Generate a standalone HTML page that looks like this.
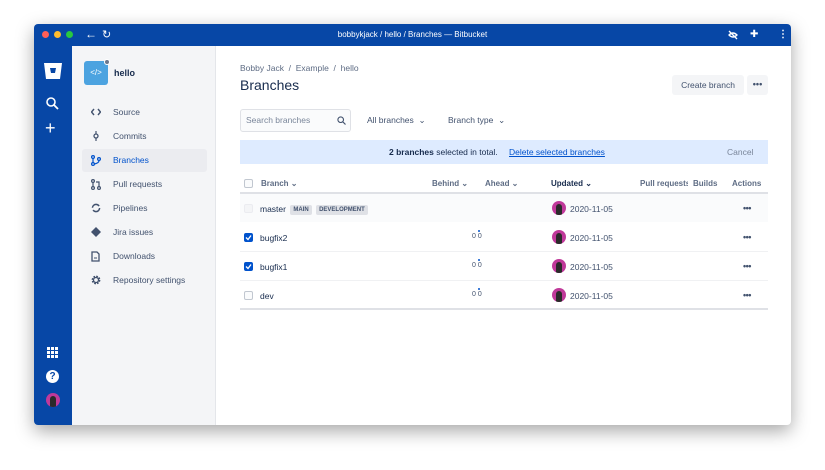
<!DOCTYPE html>
<html><head><meta charset="utf-8"><style>
*{box-sizing:border-box;margin:0;padding:0}
body{width:825px;height:470px;background:#fff;font-family:"Liberation Sans",sans-serif;position:relative;overflow:hidden;color:#172b4d}
.win{position:absolute;left:34px;top:24px;width:757px;height:401px;background:#fff;box-shadow:0 6px 18px rgba(0,0,0,.35);border-radius:4px;overflow:hidden}
.tb{position:absolute;left:0;top:0;width:757px;height:22px;background:#0747a6;color:#fff;font-size:8px}
.dot{position:absolute;top:7px;width:7px;height:7px;border-radius:50%}
.nav{position:absolute;left:0;top:22px;width:38px;height:379px;background:#0747a6}
.side{position:absolute;left:38px;top:22px;width:144px;height:379px;background:#f4f5f7;border-right:1px solid #e4e6ea}
.item{position:absolute;left:10px;width:125px;height:23px;font-size:8.5px;color:#42526e;line-height:23px;padding-left:31px;border-radius:3px}
.item svg{position:absolute;left:9px;top:6px}
.main{position:absolute;left:182px;top:22px;right:0;bottom:0}
.abs{position:absolute}
.row{position:absolute;left:24px;width:528px;height:29px;border-bottom:1px solid #f0f1f3;font-size:8.5px;color:#172b4d}
.cb{position:absolute;left:4px;top:10px;width:9px;height:9px;border:1px solid #c1c7d0;border-radius:2px;background:#fafbfc}
.cb.on{background:#0052cc;border-color:#0052cc}
.av{position:absolute;left:312px;top:7px;width:14px;height:14px;border-radius:50%;background:#c0399a;overflow:hidden}
.av:after{content:"";position:absolute;left:4px;top:3px;width:6px;height:11px;background:#2a2a2a;border-radius:3px 3px 0 0}
.dots{position:absolute;left:503px;top:9px;font-size:9px;font-weight:bold;letter-spacing:-.5px;color:#42526e}
.lz{position:absolute;left:232px;top:10px;font-size:7px;color:#42526e}
.lz:before{content:"";position:absolute;left:6px;top:-3px;width:2px;height:2px;background:#0052cc;border-radius:50%}
.tag{display:inline-block;background:#dfe1e6;color:#42526e;font-size:6px;font-weight:bold;padding:2px 3px;border-radius:2px;margin-left:2px;vertical-align:1px}
.hd{position:absolute;top:133px;font-size:8px;font-weight:bold;color:#5e6c84}
</style></head><body>
<div class="win">
 <div class="tb">
  <div class="dot" style="left:8px;background:#ff5f57"></div>
  <div class="dot" style="left:20px;background:#febc2e"></div>
  <div class="dot" style="left:32px;background:#28c840"></div>
  <div class="abs" style="left:51px;top:3px;font-size:12px">←</div>
  <div class="abs" style="left:68px;top:4px;font-size:11px">↻</div>
  <div class="abs" style="left:0;width:757px;top:6px;text-align:center">bobbykjack / hello / Branches — Bitbucket</div>
  <svg class="abs" style="left:694px;top:6px" width="10" height="10" viewBox="0 0 10 10"><path d="M1 5Q5 1 9 5Q5 9 1 5Z" fill="none" stroke="#fff" stroke-width="1.3"/><path d="M1 1L9 9" stroke="#fff" stroke-width="1.3"/></svg>
  <div class="abs" style="left:716px;top:5px;font-size:10px">✚</div>
  <div class="abs" style="left:744px;top:5px;font-size:10px;font-weight:bold">⋮</div>
 </div>
 <div class="nav">
  <svg class="abs" style="left:10px;top:17px" width="18" height="16" viewBox="0 0 18 16"><path d="M0 0H18L16 16H2Z" fill="#fff"/><path d="M6 5H12L11 10H7Z" fill="#0747a6"/></svg>
  <svg class="abs" style="left:12px;top:51px" width="13" height="13" viewBox="0 0 13 13"><circle cx="5" cy="5" r="4" fill="none" stroke="#fff" stroke-width="1.6"/><path d="M8 8L12 12" stroke="#fff" stroke-width="1.8"/></svg>
  <div class="abs" style="left:11px;top:73px;color:#fff;font-size:18px;line-height:18px">+</div>
  <svg class="abs" style="left:13px;top:301px" width="11" height="11" viewBox="0 0 11 11" fill="#fff"><rect x="0" y="0" width="3" height="3"/><rect x="4" y="0" width="3" height="3"/><rect x="8" y="0" width="3" height="3"/><rect x="0" y="4" width="3" height="3"/><rect x="4" y="4" width="3" height="3"/><rect x="8" y="4" width="3" height="3"/><rect x="0" y="8" width="3" height="3"/><rect x="4" y="8" width="3" height="3"/><rect x="8" y="8" width="3" height="3"/></svg>
  <div class="abs" style="left:12px;top:324px;width:13px;height:13px;border-radius:50%;background:#fff;color:#0747a6;font-size:10px;font-weight:bold;text-align:center;line-height:13px">?</div>
  <div class="abs" style="left:12px;top:347px;width:14px;height:14px;border-radius:50%;background:#c0399a;overflow:hidden"><div style="position:absolute;left:4px;top:3px;width:6px;height:11px;background:#2a2a2a;border-radius:3px 3px 0 0"></div></div>
 </div>
 <div class="side">
  <div class="abs" style="left:12px;top:15px;width:24px;height:24px;border-radius:3px;background:#4ca3e0;color:#fff;font-size:8px;text-align:center;line-height:24px">&lt;/&gt;</div>
  <div class="abs" style="left:32px;top:13px;width:6px;height:6px;border-radius:50%;background:#6b778c;border:1px solid #fff"></div>
  <div class="abs" style="left:42px;top:22px;font-size:9px;font-weight:bold;color:#172b4d">hello</div>
  <div class="item" style="top:55px"><svg width="10" height="10" viewBox="0 0 10 10"><path d="M3 2L0.5 5L3 8M7 2L9.5 5L7 8" fill="none" stroke="#42526e" stroke-width="1.4"/></svg>Source</div>
  <div class="item" style="top:79px"><svg width="10" height="10" viewBox="0 0 10 10"><path d="M5 0V10" stroke="#42526e" stroke-width="1.2"/><circle cx="5" cy="5" r="2" fill="#f4f5f7" stroke="#42526e" stroke-width="1.3"/></svg>Commits</div>
  <div class="item" style="top:103px;background:#ebecf0;color:#0052cc"><svg width="10" height="11" viewBox="0 0 10 11"><circle cx="2" cy="2" r="1.4" fill="none" stroke="#0052cc" stroke-width="1.2"/><circle cx="2" cy="9" r="1.4" fill="none" stroke="#0052cc" stroke-width="1.2"/><circle cx="8" cy="4" r="1.4" fill="none" stroke="#0052cc" stroke-width="1.2"/><path d="M2 3.5V7.5M8 5.5Q8 8 3.5 9" fill="none" stroke="#0052cc" stroke-width="1.2"/></svg>Branches</div>
  <div class="item" style="top:127px"><svg width="10" height="11" viewBox="0 0 10 11"><circle cx="2" cy="2" r="1.4" fill="none" stroke="#42526e" stroke-width="1.2"/><circle cx="2" cy="9" r="1.4" fill="none" stroke="#42526e" stroke-width="1.2"/><circle cx="8" cy="9" r="1.4" fill="none" stroke="#42526e" stroke-width="1.2"/><path d="M2 3.5V7.5M8 7.5V3H5" fill="none" stroke="#42526e" stroke-width="1.2"/></svg>Pull requests</div>
  <div class="item" style="top:151px"><svg width="10" height="10" viewBox="0 0 10 10"><circle cx="5" cy="5" r="3.6" fill="none" stroke="#42526e" stroke-width="1.5" stroke-dasharray="9 2.5"/></svg>Pipelines</div>
  <div class="item" style="top:175px"><svg width="10" height="10" viewBox="0 0 10 10"><path d="M5 0L10 5L5 10L0 5Z" fill="#42526e"/></svg>Jira issues</div>
  <div class="item" style="top:199px"><svg width="9" height="11" viewBox="0 0 9 11"><path d="M1 1H6L8 3V10H1Z" fill="none" stroke="#42526e" stroke-width="1.3"/><path d="M3 7H6" stroke="#42526e"/></svg>Downloads</div>
  <div class="item" style="top:223px"><svg width="10" height="10" viewBox="0 0 10 10"><circle cx="5" cy="5" r="3.3" fill="none" stroke="#42526e" stroke-width="2.2" stroke-dasharray="1.6 1"/><circle cx="5" cy="5" r="2.5" fill="none" stroke="#42526e" stroke-width="1.3"/></svg>Repository settings</div>
 </div>
 <div class="main">
  <div class="abs" style="left:24px;top:17px;font-size:8.5px;color:#5e6c84">Bobby Jack &nbsp;/&nbsp; Example &nbsp;/&nbsp; hello</div>
  <div class="abs" style="left:24px;top:31px;font-size:14px;color:#172b4d">Branches</div>
  <div class="abs" style="left:456px;top:29px;width:72px;height:20px;background:#f4f5f7;border-radius:3px;font-size:8.5px;color:#42526e;text-align:center;line-height:20px">Create branch</div>
  <div class="abs" style="left:531px;top:29px;width:21px;height:20px;background:#f4f5f7;border-radius:3px;font-size:9px;font-weight:bold;color:#42526e;text-align:center;line-height:19px">•••</div>
  <div class="abs" style="left:24px;top:63px;width:111px;height:23px;border:1px solid #dfe1e6;border-radius:3px;background:#fafbfc;font-size:8.5px;color:#7a869a;line-height:21px;padding-left:5px">Search branches
   <svg class="abs" style="left:96px;top:6px" width="9" height="9" viewBox="0 0 9 9"><circle cx="3.7" cy="3.7" r="2.8" fill="none" stroke="#42526e" stroke-width="1.1"/><path d="M6 6L8.5 8.5" stroke="#42526e" stroke-width="1.2"/></svg></div>
  <div class="abs" style="left:151px;top:69px;font-size:8.5px;color:#42526e">All branches &nbsp;⌄</div>
  <div class="abs" style="left:232px;top:69px;font-size:8.5px;color:#42526e">Branch type &nbsp;⌄</div>
  <div class="abs" style="left:24px;top:94px;width:528px;height:24px;background:#deebff;font-size:8.5px;line-height:24px">
   <span class="abs" style="left:149px"><b>2 branches</b> selected in total.</span>
   <span class="abs" style="left:269px;color:#0052cc;text-decoration:underline">Delete selected branches</span>
   <span class="abs" style="left:487px;color:#7a869a">Cancel</span>
  </div>
  <div class="abs" style="left:28px;top:133px;width:9px;height:9px;border:1px solid #c1c7d0;border-radius:2px;background:#fafbfc"></div>
  <div class="hd" style="left:45px">Branch ⌄</div>
  <div class="hd" style="left:216px">Behind ⌄</div>
  <div class="hd" style="left:269px">Ahead ⌄</div>
  <div class="hd" style="left:335px;color:#172b4d">Updated ⌄</div>
  <div class="hd" style="left:424px;width:48px;overflow:hidden;white-space:nowrap">Pull requests</div>
  <div class="hd" style="left:477px">Builds</div>
  <div class="hd" style="left:516px">Actions</div>
  <div class="abs" style="left:24px;top:146px;width:528px;height:2px;background:#dfe1e6"></div>
  <div class="row" style="top:148px;background:#fafbfc;border-bottom-color:#fff"><div class="cb" style="border-color:#ebecf0;background:#f4f5f7"></div><span class="abs" style="left:20px;top:10px">master <span class="tag">MAIN</span> <span class="tag">DEVELOPMENT</span></span><div class="av"></div><span class="abs" style="left:330px;top:10px;color:#42526e">2020-11-05</span><div class="dots">•••</div></div>
  <div class="row" style="top:177px"><div class="cb on"><svg width="7" height="7" viewBox="0 0 7 7" style="position:absolute;left:0;top:0"><path d="M1 3.5L3 5.5L6 1.5" fill="none" stroke="#fff" stroke-width="1.3"/></svg></div><span class="abs" style="left:20px;top:10px">bugfix2</span><span class="lz">0 0</span><div class="av"></div><span class="abs" style="left:330px;top:10px;color:#42526e">2020-11-05</span><div class="dots">•••</div></div>
  <div class="row" style="top:206px"><div class="cb on"><svg width="7" height="7" viewBox="0 0 7 7" style="position:absolute;left:0;top:0"><path d="M1 3.5L3 5.5L6 1.5" fill="none" stroke="#fff" stroke-width="1.3"/></svg></div><span class="abs" style="left:20px;top:10px">bugfix1</span><span class="lz">0 0</span><div class="av"></div><span class="abs" style="left:330px;top:10px;color:#42526e">2020-11-05</span><div class="dots">•••</div></div>
  <div class="row" style="top:235px;border-bottom:2px solid #dfe1e6"><div class="cb"></div><span class="abs" style="left:20px;top:10px">dev</span><span class="lz">0 0</span><div class="av"></div><span class="abs" style="left:330px;top:10px;color:#42526e">2020-11-05</span><div class="dots">•••</div></div>
 </div>
</div>
</body></html>
